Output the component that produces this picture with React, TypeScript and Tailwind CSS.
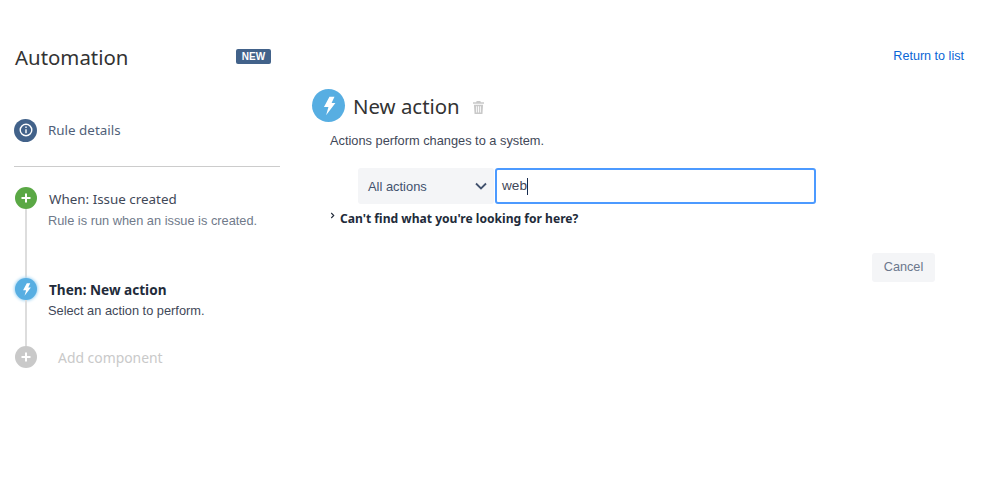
const sans = 'font-["Liberation_Sans",Arial,sans-serif]';
const noto = 'font-["Noto_Sans","Open_Sans",sans-serif]';

function Bolt({ className }: { className: string }) {
  return (
    <svg viewBox="0 0 24 24" className={className} fill="currentColor">
      <path d="M12.5 2H18l-3.2 6.8H19L8.8 22l2.6-8.8H6.5z" />
    </svg>
  );
}

function Plus() {
  return (
    <svg viewBox="0 0 10 10" className="w-[10px] h-[10px]" fill="#fff">
      <path d="M4 0.5h2V4h3.5v2H6v3.5H4V6H0.5V4H4z" />
    </svg>
  );
}

export default function App() {
  return (
    <div className={`w-[999px] h-[494px] bg-white flex overflow-hidden ${sans}`}>
      <aside className="w-[266px] ml-[14px] shrink-0 pt-[42px]">
        <div className="flex items-start justify-between pl-px pr-[9px]">
          <h1 className={`text-[20.4px] leading-[30px] text-[#333333] ${noto}`}>Automation</h1>
          <span className="mt-[7px] h-[15px] w-[35px] rounded-[2px] bg-[#42628a] text-white text-[10px] leading-[15px] font-bold text-center">NEW</span>
        </div>
        <div className="mt-[46px] flex items-center gap-[11px] h-[24px]">
          <span className="w-[23px] h-[23px] rounded-full bg-[#42628a] flex items-center justify-center">
            <svg viewBox="0 0 14 14" className="w-[14px] h-[14px]" fill="none" stroke="#fff" strokeWidth="1.4">
              <circle cx="7" cy="7" r="5.8" />
              <path d="M7 6.2v4M7 3.4v1.6" />
            </svg>
          </span>
          <span className={`text-[13.4px] text-[#505f79] ${noto}`}>Rule details</span>
        </div>
        <div className="mt-[24px] h-px bg-[#cccccc]" />
        <div className="mt-[20px] flex gap-[11px] pl-px">
          <div className="w-[22px] flex flex-col items-center shrink-0">
            <span className="w-[22px] h-[22px] rounded-full bg-[#5aa845] flex items-center justify-center shrink-0"><Plus /></span>
            <span className="w-[2px] h-[69px] bg-[#dddddd]" />
            <span className="w-[22px] h-[22px] rounded-full bg-[#57aee2] shadow-[0_0_3px_1px_#a8d8f5] flex items-center justify-center shrink-0 text-white"><Bolt className="w-[15px] h-[15px]" /></span>
            <span className="w-[2px] h-[46px] bg-[#dddddd]" />
            <span className="w-[22px] h-[22px] rounded-full bg-[#c9c9c9] flex items-center justify-center shrink-0"><Plus /></span>
          </div>
          <div className="flex flex-col">
            <div className={`mt-[2px] text-[13.4px] leading-[20px] text-[#3f4858] pl-px ${noto}`}>When: Issue created</div>
            <div className="text-[12.8px] leading-[20px] mt-[2px] text-[#707a8a]">Rule is run when an issue is created.</div>
            <div className={`mt-[49px] text-[13.6px] leading-[20px] font-bold text-[#222b3a] pl-px ${noto}`}>Then: New action</div>
            <div className="text-[12.8px] leading-[20px] mt-px text-[#3f4858]">Select an action to perform.</div>
            <div className={`mt-[27px] text-[13.9px] leading-[20px] text-[#c9c9c9] pl-[10px] ${noto}`}>Add component</div>
          </div>
        </div>
      </aside>
      <main className="flex-1 relative min-w-0 pl-[32px]">
        <a className="absolute right-[35px] top-[48px] text-[12.6px] leading-[16px] text-[#0a66d6]">Return to list</a>
        <div className="mt-[89px] flex items-center gap-[8px] h-[33px]">
          <span className="w-[33px] h-[33px] rounded-full bg-[#57aee2] flex items-center justify-center text-white"><Bolt className="w-[22px] h-[22px]" /></span>
          <h2 className={`text-[20.4px] leading-[30px] mt-[1px] text-[#333333] ${noto}`}>New action</h2>
          <svg viewBox="0 0 12 14" className="w-[11px] h-[13px] ml-[5px] mt-[4px]" fill="#c9c9c9">
            <path d="M4 0h4l.6 1.2H12v1.6H0V1.2h3.4zM1 4h10l-.7 10H1.7zM3.5 5.5v7h1v-7zm2 0v7h1v-7zm2 0v7h1v-7z" fillRule="evenodd" />
          </svg>
        </div>
        <p className="mt-[9px] ml-[18px] text-[12.8px] leading-[20px] text-[#3f4858]">Actions perform changes to a system.</p>
        <div className="mt-[17px] ml-[46px] flex gap-px h-[36px]">
          <div className="w-[136px] bg-[#f4f5f7] rounded-[3px] flex items-center justify-between pl-[10px] pr-[7px] text-[12.9px] text-[#42526e]">
            <span className="mt-px">All actions</span>
            <svg viewBox="0 0 12 8" className="w-[12px] h-[8px]" fill="none" stroke="#42526e" strokeWidth="1.8"><path d="M1 1.5 6 6.5 11 1.5" /></svg>
          </div>
          <div className="w-[321px] border-2 border-[#4c9aff] rounded-[3px] flex items-center pl-[5px] text-[13.6px] text-[#3f4858]">web<span className="w-px h-[17px] bg-[#172b4d]" /></div>
        </div>
        <div className="mt-[7px] ml-[18px] flex items-start gap-[5px] h-[16px]">
          <svg viewBox="0 0 6 8" className="w-[5px] h-[7px] mt-[1px]" fill="none" stroke="#222b3a" strokeWidth="1.3"><path d="M1.5 1 4.5 4 1.5 7" /></svg>
          <span className={`text-[12.1px] leading-[16px] font-bold text-[#222b3a] ${noto}`}>Can't find what you're looking for here?</span>
        </div>
        <div className="mt-[26px] flex justify-end pr-[64px]">
          <button className="w-[63px] h-[29px] bg-[#f4f5f7] rounded-[3px] text-[12.7px] text-[#6b778c]">Cancel</button>
        </div>
      </main>
    </div>
  );
}
